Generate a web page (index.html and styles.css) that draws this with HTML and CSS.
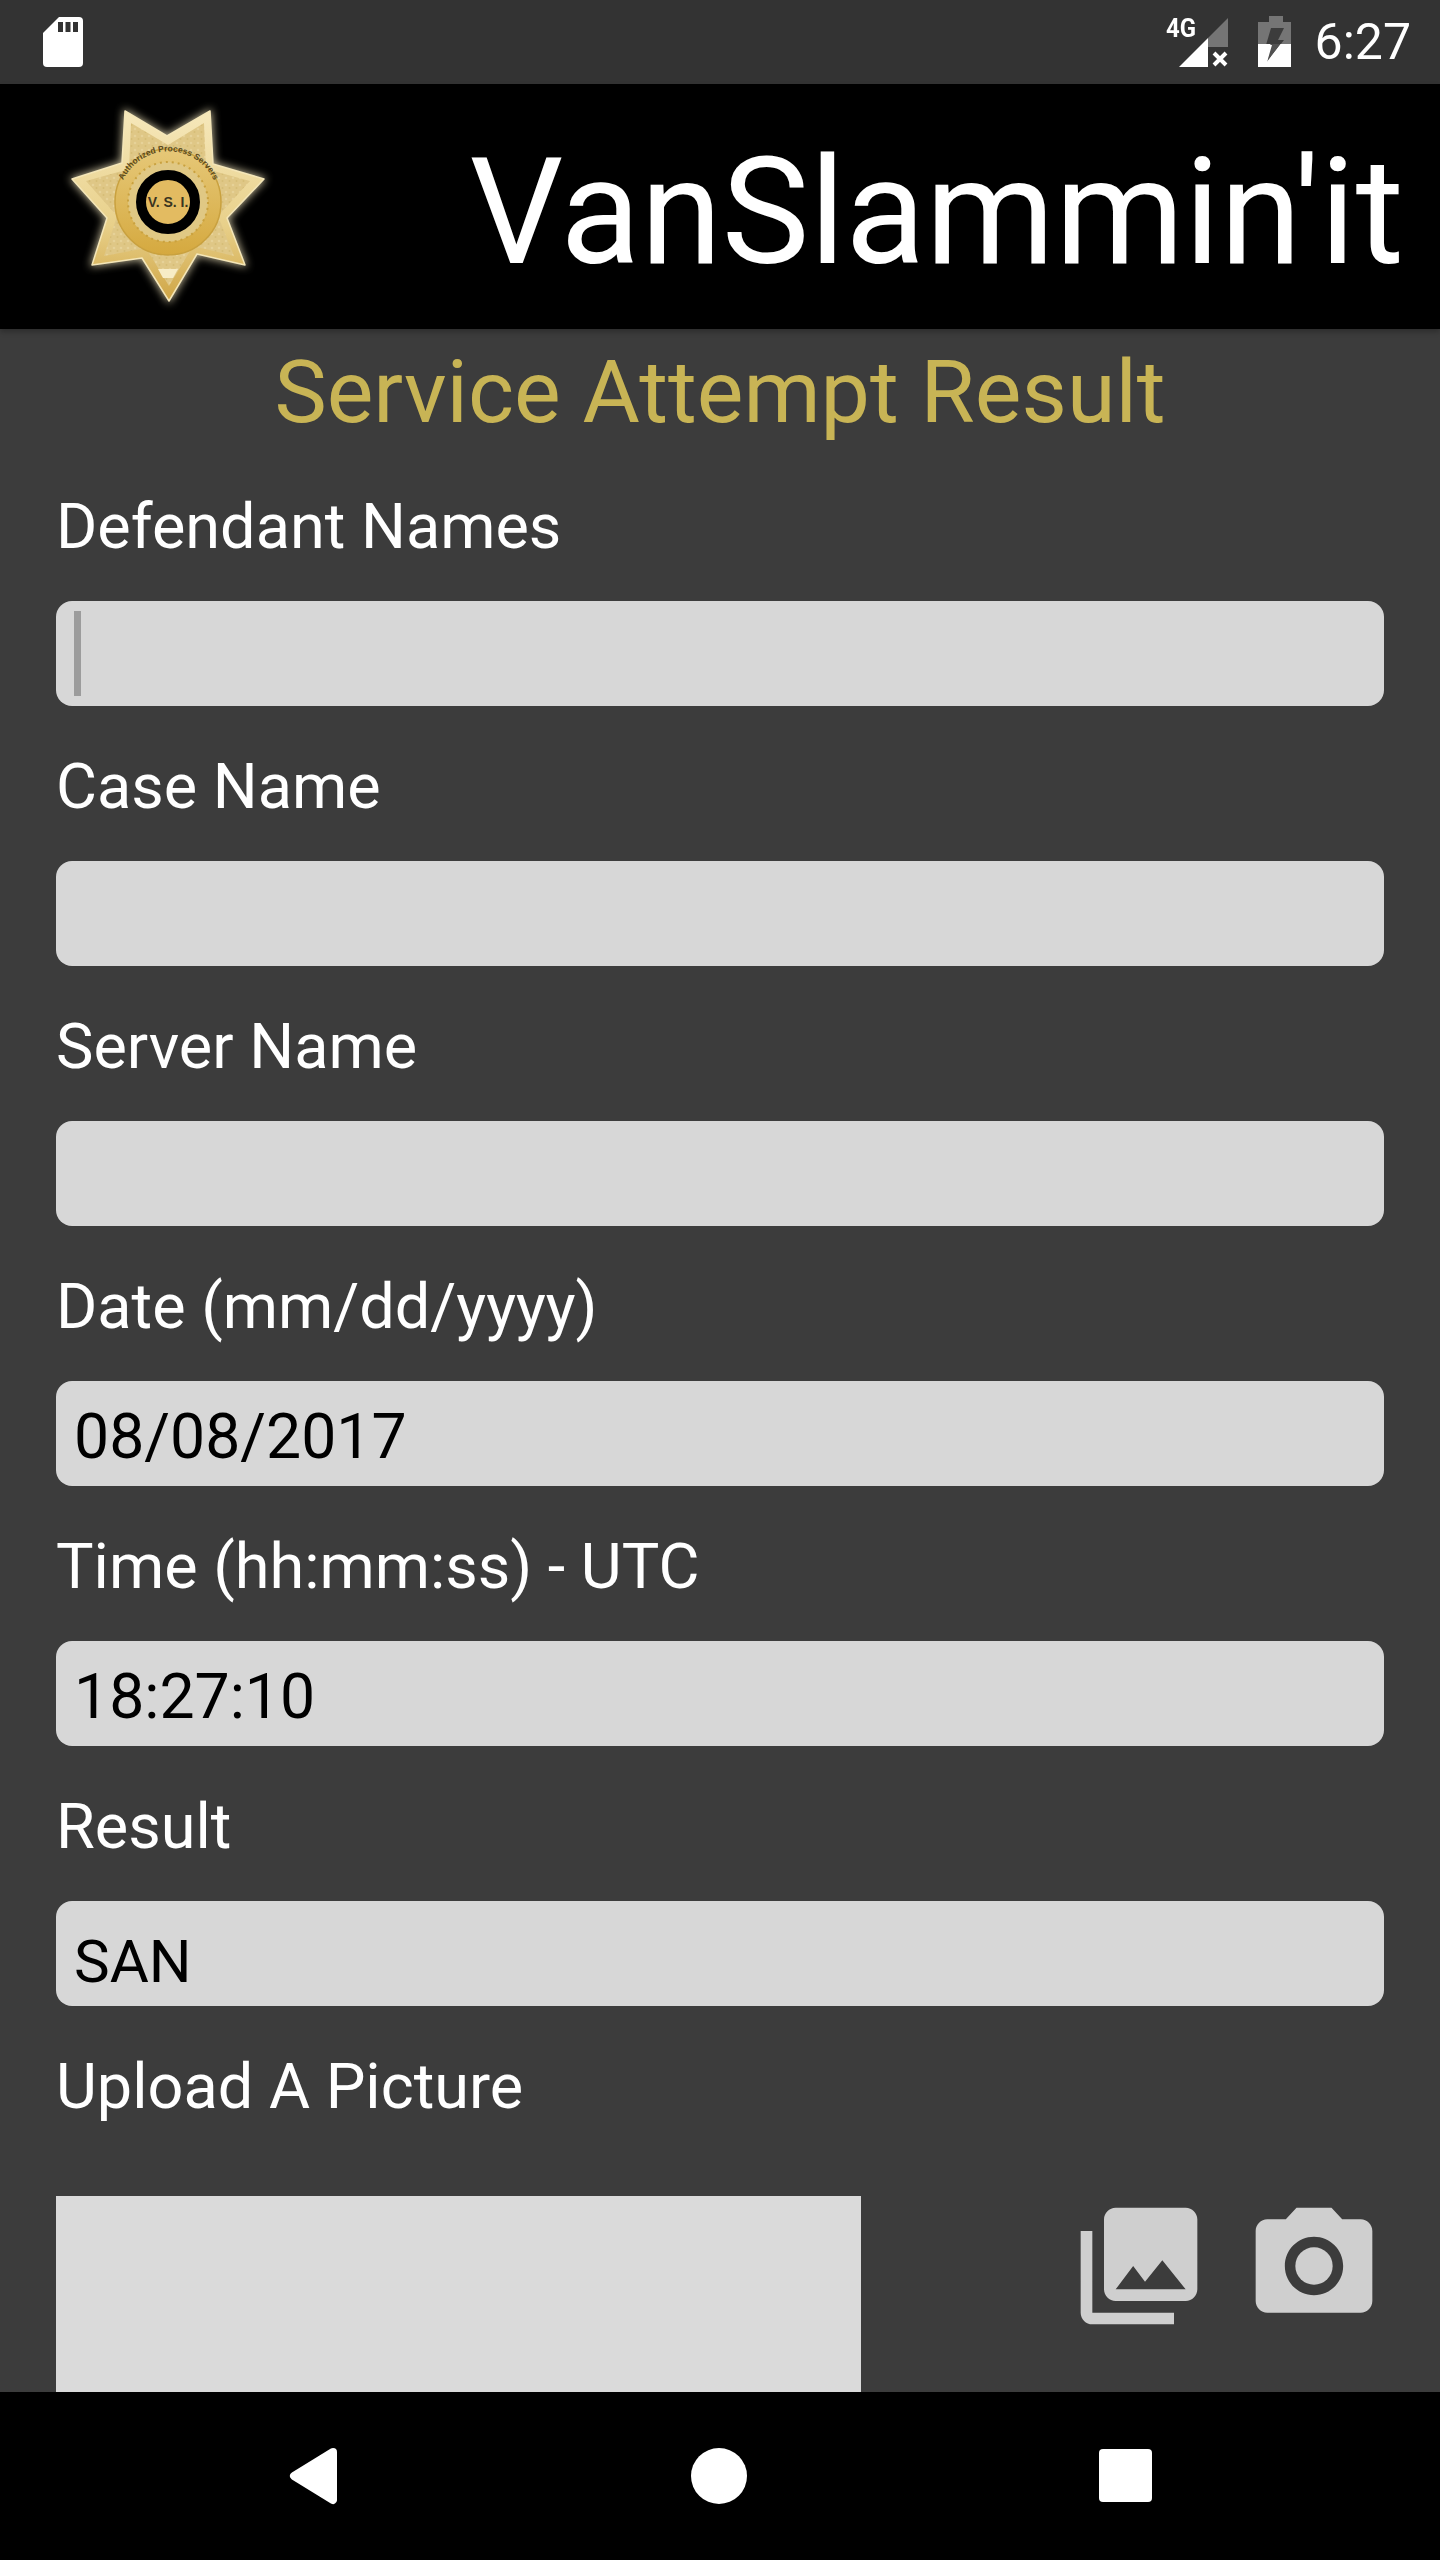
FILE: index.html
```html
<!DOCTYPE html>
<html lang="en">
<head>
<meta charset="utf-8">
<title>VanSlammin'it</title>
<link rel="stylesheet" href="styles.css">
</head>
<body>
<div class="screen">
  <div class="status-bar">
    <svg class="sd-icon" width="40" height="50" viewBox="0 0 40 50">
      <path d="M16 0H36a4 4 0 0 1 4 4V46a4 4 0 0 1-4 4H4a4 4 0 0 1-4-4V16Z" fill="#fff"/>
      <rect x="15" y="5" width="5" height="10" fill="#333"/>
      <rect x="22.500" y="5" width="5" height="10" fill="#333"/>
      <rect x="30" y="5" width="5" height="10" fill="#333"/>
    </svg>
    <div class="status-right">
      <div class="signal">
        <span class="net-label">4G</span>
        <svg class="signal-icon" width="49" height="49" viewBox="0 0 49 49">
          <path d="M0 49H29V20Z" fill="#fff"/>
          <path d="M29 20L49 0V29H29Z" fill="#757575"/>
          <path d="M35 35L47 47M47 35L35 47" stroke="#fff" stroke-width="4" fill="none"/>
        </svg>
      </div>
      <svg class="battery-icon" width="33" height="51" viewBox="0 0 33 51">
        <path d="M11 0H25V6H33V51H0V6H11Z" fill="#757575"/>
        <path d="M0 28H33V51H0Z" fill="#fff"/>
        <path d="M13 12H26L20 24H26L9 46L14 29H8Z" fill="#333" opacity=".85"/>
        <path d="M0 28H12.500L9 46L22.700 28H33V51H0Z" fill="#fff"/>
      </svg>
      <span class="clock">6:27</span>
    </div>
  </div>

  <header class="app-header">
    <svg class="badge" width="200" height="206" viewBox="66 103 200 206">
      <defs>
        <linearGradient id="starFill" x1="0" y1="0" x2="0" y2="1">
          <stop offset="0" stop-color="#f6e8bb"/>
          <stop offset=".6" stop-color="#e8d08a"/>
          <stop offset="1" stop-color="#cfa545"/>
        </linearGradient>
        <linearGradient id="ringFill" x1="0" y1="0" x2="0" y2="1">
          <stop offset="0" stop-color="#e6c878"/>
          <stop offset="1" stop-color="#d5a93f"/>
        </linearGradient>
        <pattern id="engrave" width="7" height="7" patternUnits="userSpaceOnUse">
          <rect width="7" height="7" fill="#dfc786"/>
          <circle cx="2" cy="2" r="1.300" fill="#e6d298"/>
          <circle cx="5.500" cy="5" r="1" fill="#d6bc76"/>
        </pattern>
        <filter id="glow" x="-15%" y="-15%" width="130%" height="130%">
          <feGaussianBlur stdDeviation="4"/>
        </filter>
        <path id="arcText" d="M122 182A50 50 0 0 1 215 182"/>
      </defs>
      <path d="M125 110L167 135L210 110L213 163L264 178L227 217L245 264L197 253L169 300L142 257L92 264L107 217L72 178L122 162Z" fill="#fff3c8" stroke="#fff3c8" stroke-width="3" opacity=".75" filter="url(#glow)"/>
      <path d="M125 110L167 135L210 110L213 163L264 178L227 217L245 264L197 253L169 300L142 257L92 264L107 217L72 178L122 162Z" fill="url(#starFill)" stroke="#f4e6b8" stroke-width="1.500" stroke-linejoin="round"/>
      <path d="M131 122L168 144L204 122L206 168L250 180L218 215L234 255L193 245L169 285L146 247L104 255L117 215L86 180L129 168Z" fill="url(#engrave)"/>
      <path d="M158 268H178L173 277H163Z" fill="#f7ecc6"/>
      <circle cx="168" cy="201" r="53" fill="url(#ringFill)" stroke="#c9a13f" stroke-width="1.500"/>
      <circle cx="168" cy="201" r="40" fill="#e0c884" stroke="#c9a13f" stroke-width="2" stroke-dasharray="2 4"/>
      <circle cx="168" cy="201" r="27" fill="#e3bb61" stroke="#000" stroke-width="10"/>
      <text class="badge-initials" x="168" y="206" text-anchor="middle">V. S. I.</text>
      <text class="badge-arc"><textPath href="#arcText" startOffset="50%" text-anchor="middle">Authorized Process Servers</textPath></text>
    </svg>
    <h1 class="app-title">VanSlammin'it</h1>
  </header>

  <main class="content">
    <h2 class="page-title">Service Attempt Result</h2>
    <div class="field">
      <label class="field-label">Defendant Names</label>
      <div class="field-box"><span class="caret"></span></div>
    </div>
    <div class="field">
      <label class="field-label">Case Name</label>
      <div class="field-box"></div>
    </div>
    <div class="field">
      <label class="field-label">Server Name</label>
      <div class="field-box"></div>
    </div>
    <div class="field">
      <label class="field-label">Date (mm/dd/yyyy)</label>
      <div class="field-box">08/08/2017</div>
    </div>
    <div class="field">
      <label class="field-label">Time (hh:mm:ss) - UTC</label>
      <div class="field-box">18:27:10</div>
    </div>
    <div class="field">
      <label class="field-label">Result</label>
      <div class="field-box field-box-low">SAN</div>
    </div>
    <div class="field">
      <label class="field-label">Upload A Picture</label>
      <div class="upload-row">
        <div class="picture-preview"></div>
        <div class="upload-actions">
          <svg class="upload-icon" width="140" height="140" viewBox="0 0 24 24"><path d="M22 16V4c0-1.100-.9-2-2-2H8c-1.100 0-2 .9-2 2v12c0 1.100.9 2 2 2h12c1.100 0 2-.9 2-2zm-11-4l2.030 2.710L16 11l4 5H8l3-4zM2 6v14c0 1.100.9 2 2 2h14v-2H4V6H2z"/></svg>
          <svg class="upload-icon" width="140" height="140" viewBox="0 0 24 24"><circle cx="12" cy="12" r="3.200"/><path d="M9 2L7.170 4H4c-1.100 0-2 .9-2 2v12c0 1.100.9 2 2 2h16c1.100 0 2-.9 2-2V6c0-1.100-.9-2-2-2h-3.170L15 2H9zm3 15c-2.760 0-5-2.240-5-5s2.240-5 5-5 5 2.240 5 5-2.240 5-5 5z"/></svg>
        </div>
      </div>
    </div>
  </main>

  <nav class="nav-bar">
    <svg class="nav-back" width="50" height="58" viewBox="0 0 50 58"><path d="M44 5L5 29L44 53Z" fill="#fff" stroke="#fff" stroke-width="8" stroke-linejoin="round"/></svg>
    <span class="nav-home"></span>
    <span class="nav-recent"></span>
  </nav>
</div>
</body>
</html>
```

FILE: styles.css
```css
* { box-sizing: border-box; }

html, body {
  margin: 0;
  padding: 0;
  background: #3c3c3c;
}

.screen {
  width: 1440px;
  height: 2560px;
  display: flex;
  flex-direction: column;
  font-family: Roboto, "Liberation Sans", sans-serif;
  overflow: hidden;
}

.status-bar {
  flex: 0 0 84px;
  background: #333;
  display: flex;
  align-items: center;
  justify-content: space-between;
  padding: 0 29px 0 43px;
}

.sd-icon { display: block; margin-top: -1px; }

.status-right {
  display: flex;
  align-items: center;
}

.signal {
  position: relative;
  width: 61px;
  height: 84px;
  margin-right: 30px;
}

.net-label {
  position: absolute;
  left: -1px;
  top: 13px;
  font-size: 26px;
  line-height: 30px;
  font-weight: 700;
  color: #fff;
  transform: scaleX(.92);
  transform-origin: left center;
}

.signal-icon {
  position: absolute;
  left: 12px;
  top: 18px;
}

.battery-icon { display: block; margin: -1px 24px 0 0; }

.clock {
  font-size: 50px;
  line-height: 84px;
  color: #fff;
}

.app-header {
  flex: 0 0 245px;
  background: #000;
  display: flex;
  align-items: center;
  justify-content: space-between;
  padding: 0 36px 0 66px;
  box-shadow: 0 3px 5px rgba(0, 0, 0, .25);
  position: relative;
}

.badge { display: block; overflow: visible; }

.badge-initials {
  font-family: "Liberation Sans", Arial, sans-serif;
  font-size: 14px;
  font-weight: 700;
  fill: #3a3420;
}

.badge-arc {
  font-family: "Liberation Sans", Arial, sans-serif;
  font-size: 8.500px;
  font-weight: 700;
  fill: #5a4a1c;
}

.app-title {
  margin: 13px 0 0;
  font-size: 147.500px;
  line-height: 172px;
  font-weight: 400;
  color: #fff;
}

.content {
  flex: 1 1 auto;
  min-height: 0;
  overflow: hidden;
  background: #3c3c3c;
  padding: 11px 56px 0;
}

.page-title {
  margin: 0 0 2px;
  font-size: 88px;
  line-height: 104px;
  font-weight: 400;
  color: #c8b455;
  text-align: center;
}

.field-label {
  display: block;
  height: 155px;
  padding-top: 44px;
  font-size: 63px;
  line-height: 74px;
  color: #fff;
}

.field-box {
  position: relative;
  height: 105px;
  border-radius: 16px;
  background: #d7d7d7;
  padding: 0 18px;
  font-size: 62.500px;
  line-height: 111px;
  color: #000;
}

.field-box-low {
  font-size: 60px;
  line-height: 122px;
}

.caret {
  position: absolute;
  left: 18px;
  top: 10px;
  width: 7px;
  height: 85px;
  background: #9c9c9c;
}

.upload-row {
  display: flex;
  justify-content: space-between;
  align-items: flex-start;
  margin-top: 35px;
}

.picture-preview {
  width: 805px;
  height: 300px;
  background: #dadada;
}

.upload-actions {
  display: flex;
  gap: 35px;
}

.upload-icon { display: block; fill: #cfcfcf; }

.nav-bar {
  flex: 0 0 168px;
  background: #000;
  position: relative;
  z-index: 1;
  display: flex;
  align-items: center;
  padding: 0 288px 1px 289px;
  justify-content: space-between;
}

.nav-back { display: block; }

.nav-home {
  width: 56px;
  height: 56px;
  border-radius: 50%;
  background: #fff;
}

.nav-recent {
  width: 53px;
  height: 53px;
  border-radius: 4px;
  background: #fff;
}
```
